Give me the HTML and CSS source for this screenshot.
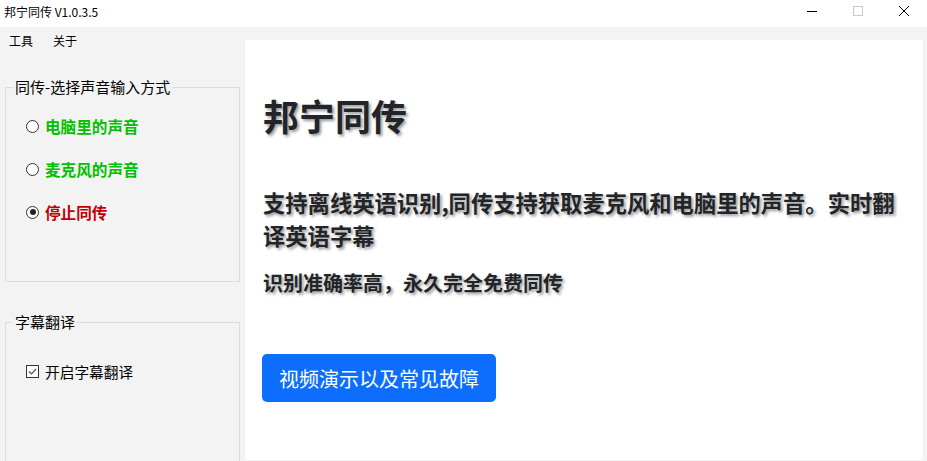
FILE: index.html
```html
<!DOCTYPE html>
<html>
  <head>
    <meta charset="UTF-8">
    <title>邦宁同传 V1.0.3.5</title>
    <link rel="stylesheet" href="styles.css">
  </head>
  <body>
    <!-- window title bar -->
    <div class="titlebar">
      <span class="title">邦宁同传 V1.0.3.5</span>
      <div class="win-buttons">
        <span class="win-btn">
          <svg width="10" height="10" viewBox="0 0 10 10"><line x1="0" y1="5.5" x2="10" y2="5.5" stroke="#000" stroke-width="1"/></svg>
        </span>
        <span class="win-btn">
          <svg width="10" height="10" viewBox="0 0 10 10"><rect x="0.5" y="0.5" width="9" height="9" fill="none" stroke="#c8c8c8" stroke-width="1"/></svg>
        </span>
        <span class="win-btn">
          <svg width="10" height="10" viewBox="0 0 10 10"><path d="M0 0 L10 10 M10 0 L0 10" stroke="#000" stroke-width="1"/></svg>
        </span>
      </div>
    </div>

    <div class="window">
      <div class="side">
        <div class="menu">
          <span>工具</span>
          <span>关于</span>
        </div>

        <fieldset class="group">
          <legend>同传-选择声音输入方式</legend>
          <div class="group-body radios">
            <label class="radio green"><span class="dot"></span>电脑里的声音</label>
            <label class="radio green"><span class="dot"></span>麦克风的声音</label>
            <label class="radio red"><span class="dot checked"></span>停止同传</label>
          </div>
        </fieldset>

        <fieldset class="group group-tall">
          <legend>字幕翻译</legend>
          <div class="group-body checks">
            <label class="check">
              <span class="box">
                <svg width="11" height="11" viewBox="0 0 11 11"><path d="M2 5.5 L4.5 8 L9 3" fill="none" stroke="#555" stroke-width="1.2"/></svg>
              </span>
              开启字幕翻译
            </label>
          </div>
        </fieldset>
      </div>

      <div class="content">
        <h1>邦宁同传</h1>
        <p class="lead">支持离线英语识别,同传支持获取麦克风和电脑里的声音。实时翻译英语字幕</p>
        <p class="sub">识别准确率高，永久完全免费同传</p>
        <button class="btn">视频演示以及常见故障</button>
      </div>
    </div>
  </body>
</html>
```

FILE: styles.css
```css
body {
  margin: 0;
  width: 927px;
  height: 461px;
  overflow: hidden;
  background-color: #f3f3f3;
  font-family: "Noto Sans CJK SC", "Liberation Sans", sans-serif;
  color: #000;
}

/* title bar */
.titlebar {
  height: 27px;
  background-color: #fff;
  display: flex;
  align-items: center;
  justify-content: space-between;
}

.title {
  font-size: 12px;
  padding-left: 4px;
  line-height: 14px;
  margin-top: -4px;
}

.win-buttons {
  display: flex;
  height: 100%;
}

.win-btn {
  width: 46px;
  display: flex;
  align-items: flex-start;
  justify-content: center;
  padding-top: 6px;
}

.win-btn svg {
  display: block;
}

.window {
  display: flex;
  height: 434px;
}

/* left side */
.side {
  width: 245px;
  flex-shrink: 0;
  overflow: hidden;
}

.menu {
  display: flex;
  gap: 20px;
  padding-left: 9px;
  height: 26px;
  align-items: center;
  font-size: 12px;
}

.group {
  margin: 25px 0 0 5px;
  width: 235px;
  box-sizing: border-box;
  padding: 0;
  border: 1px solid #dcdcdc;
}

.group legend {
  margin-left: 7px;
  padding: 0 2px;
  font-size: 15px;
  line-height: 18px;
}

.group-body {
  height: 185px;
  padding: 18px 0 0 19px;
  box-sizing: border-box;
}

.group-tall {
  margin-top: 31px;
}

.radios {
  display: flex;
  flex-direction: column;
  gap: 19px;
}

.radio {
  display: flex;
  align-items: center;
  height: 24px;
  font-size: 15.6px;
  font-weight: bold;
  gap: 6px;
}

.radio.green {
  color: #00c000;
}

.radio.red {
  color: #c00000;
}

.dot {
  width: 11px;
  height: 11px;
  border: 1px solid #333;
  border-radius: 50%;
  background-color: #fff;
  position: relative;
  margin-left: 1px;
}

.dot.checked::after {
  content: "";
  position: absolute;
  left: 2.5px;
  top: 2.5px;
  width: 6px;
  height: 6px;
  border-radius: 50%;
  background-color: #222;
}

.checks {
  padding-top: 28px;
  height: 200px;
}

.check {
  display: flex;
  align-items: center;
  height: 24px;
  font-size: 14.7px;
  gap: 6px;
}

.box {
  width: 11px;
  height: 11px;
  border: 1px solid #333;
  background-color: #fff;
  margin-left: 1px;
}

.box svg {
  display: block;
}

/* main white panel */
.content {
  flex: 1;
  margin: 13px 4px 1px 0;
  background-color: #fff;
  padding: 53px 10px 0 18px;
  color: #212529;
}

.content h1 {
  margin: 0;
  font-size: 36px;
  line-height: 44px;
  font-weight: bold;
  text-shadow: 2px 2px 3px #999;
}

.lead {
  margin: 49px 0 0 0;
  font-size: 22.3px;
  line-height: 33px;
  font-weight: bold;
  text-shadow: 2px 2px 3px #999;
}

.sub {
  margin: 17px 0 0 0;
  font-size: 20px;
  line-height: 28px;
  font-weight: bold;
  text-shadow: 2px 2px 3px #999;
}

.btn {
  margin: 57px 0 0 -1px;
  width: 234px;
  height: 48px;
  border: none;
  border-radius: 5px;
  background-color: #0d6efd;
  color: #fff;
  font-family: "Noto Sans CJK SC", sans-serif;
  font-size: 20px;
  padding: 0;
}
```
